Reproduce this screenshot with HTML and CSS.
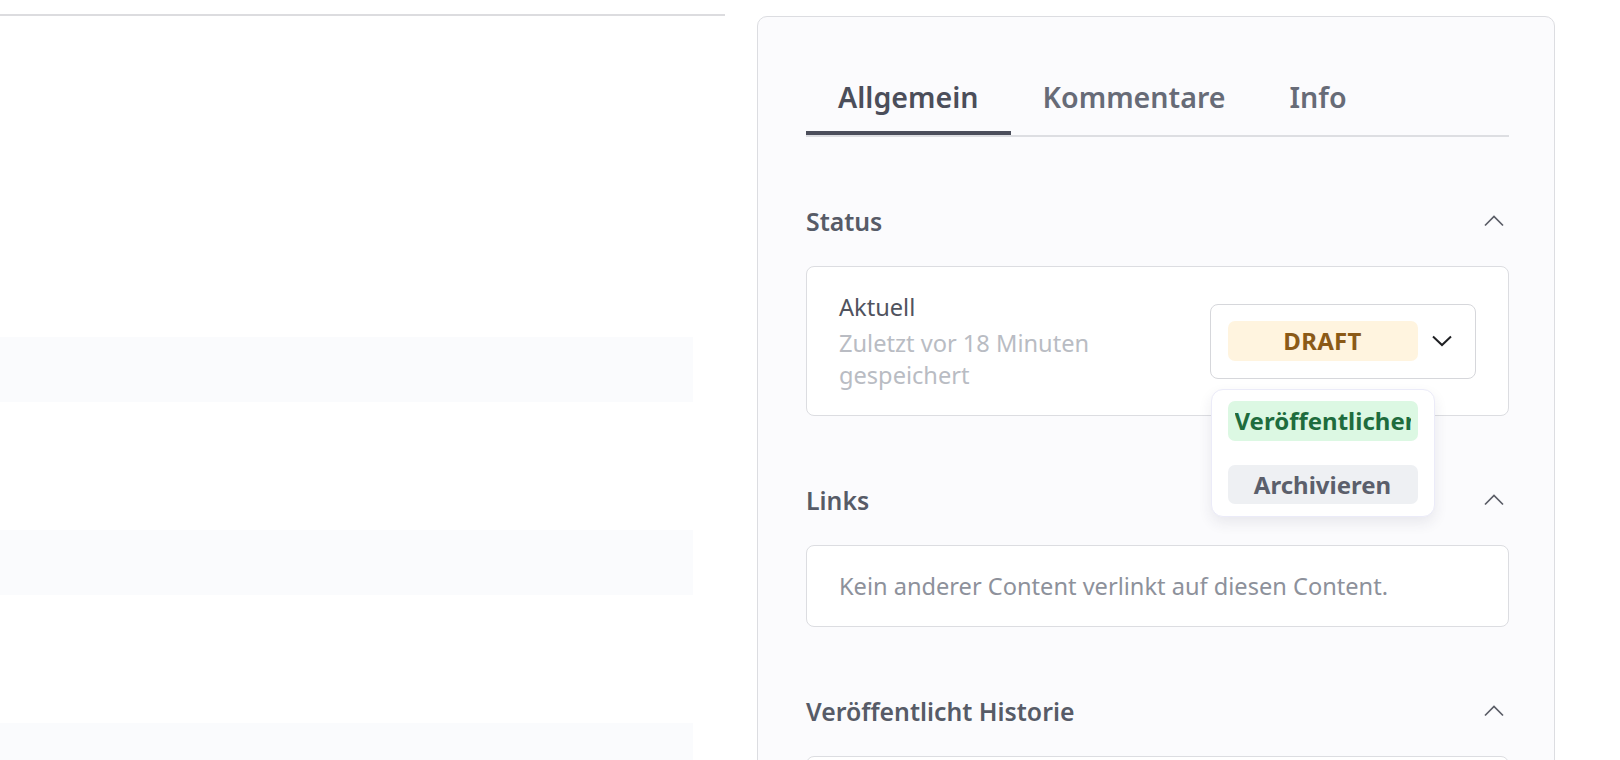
FILE: index.html
```html
<!DOCTYPE html>
<html lang="de">
<head>
    <meta charset="UTF-8">
    <meta name="viewport" content="width=device-width, initial-scale=1.0">
    <title>Content bearbeiten</title>
    <link rel="stylesheet" href="styles.css">
</head>
<body>
    <div class="page">
        <!-- Hauptbereich (Liste) -->
        <div class="main">
            <div class="rows">
                <div class="row"></div>
                <div class="row"></div>
                <div class="row"></div>
                <div class="row"></div>
                <div class="row"></div>
                <div class="row row-shade"></div>
                <div class="row"></div>
                <div class="row"></div>
                <div class="row row-shade"></div>
                <div class="row"></div>
                <div class="row"></div>
                <div class="row row-shade"></div>
            </div>
        </div>

        <!-- Seitenleiste -->
        <aside class="sidebar">
            <div class="tabs">
                <div class="tab tab-active">Allgemein</div>
                <div class="tab">Kommentare</div>
                <div class="tab">Info</div>
            </div>

            <div class="section">
                <div class="section-head">
                    <span class="section-title">Status</span>
                    <svg class="chevron-up" width="30" height="30" viewBox="0 0 30 30"><polyline points="6,19.5 15,10.5 24,19.5" fill="none" stroke="#5a5d66" stroke-width="1.7"/></svg>
                </div>
                <div class="box status-box">
                    <div class="status-info">
                        <div class="status-current">Aktuell</div>
                        <div class="status-saved">Zuletzt vor 18 Minuten<br>gespeichert</div>
                    </div>
                    <div class="select-wrap">
                        <div class="select">
                            <span class="pill pill-draft">DRAFT</span>
                            <svg class="chevron-down" width="22" height="14" viewBox="0 0 22 14"><polyline points="2,2.5 11,11 20,2.5" fill="none" stroke="#1f2023" stroke-width="2"/></svg>
                        </div>
                        <div class="menu">
                            <div class="pill pill-publish"><span>Veröffentlichen</span></div>
                            <div class="pill pill-archive">Archivieren</div>
                        </div>
                    </div>
                </div>
            </div>

            <div class="section">
                <div class="section-head">
                    <span class="section-title">Links</span>
                    <svg class="chevron-up" width="30" height="30" viewBox="0 0 30 30"><polyline points="6,19.5 15,10.5 24,19.5" fill="none" stroke="#5a5d66" stroke-width="1.7"/></svg>
                </div>
                <div class="box links-box">
                    Kein anderer Content verlinkt auf diesen Content.
                </div>
            </div>

            <div class="section">
                <div class="section-head">
                    <span class="section-title">Veröffentlicht Historie</span>
                    <svg class="chevron-up" width="30" height="30" viewBox="0 0 30 30"><polyline points="6,19.5 15,10.5 24,19.5" fill="none" stroke="#5a5d66" stroke-width="1.7"/></svg>
                </div>
                <div class="box history-box"></div>
            </div>
        </aside>
    </div>
</body>
</html>
```

FILE: styles.css
```css
:root {
    --border: #dcdde1;
    --panel-bg: #fbfbfd;
    --text-dark: #4b4e5a;
    --text-mid: #676b77;
    --text-light: #b9bcc3;
    --text-muted: #8d919b;
}

* {
    margin: 0;
    padding: 0;
    box-sizing: border-box;
}

body {
    background-color: #ffffff;
    font-family: 'Noto Sans', 'Open Sans', sans-serif;
    color: var(--text-dark);
    overflow: hidden;
    height: 760px;
}

.page {
    display: flex;
    gap: 32px;
    padding-top: 14px;
    height: 100%;
}

.main {
    width: 725px;
    flex-shrink: 0;
    border-top: 2px solid #dcdcdf;
}

.rows {
    width: 693px;
}

.row {
    height: 64.3px;
}

.row-shade {
    background-color: #fafbfd;
}

.sidebar {
    width: 798px;
    flex-shrink: 0;
    margin-top: 2px;
    min-height: 800px;
    background-color: var(--panel-bg);
    border: 1.5px solid var(--border);
    border-radius: 10px;
    padding: 61px 45px 0 48px;
}

.tabs {
    display: flex;
    border-bottom: 2px solid #dddee2;
}

.tab {
    font-size: 28.6px;
    font-weight: 600;
    line-height: 38px;
    color: var(--text-mid);
    padding: 0 32px 15px;
    border-bottom: 4px solid transparent;
}

.tab-active {
    color: var(--text-dark);
    border-bottom-color: #4b4e5b;
}

.section {
    margin-top: 67px;
}

.section-head {
    display: flex;
    justify-content: space-between;
    align-items: center;
    height: 33px;
}

.section-title {
    font-size: 24.8px;
    font-weight: 600;
    color: #575b67;
}

.box {
    margin-top: 29px;
    background-color: #ffffff;
    border: 1.5px solid var(--border);
    border-radius: 8px;
    padding: 24px 32px;
    font-size: 23.6px;
    line-height: 32px;
}

.status-box {
    display: flex;
    justify-content: space-between;
    align-items: center;
}

.status-current {
    color: #50535e;
    margin-bottom: 4px;
}

.status-saved {
    color: var(--text-light);
}

.select-wrap {
    position: relative;
}

.select {
    width: 266px;
    height: 75px;
    border: 1.5px solid #d6d7db;
    border-radius: 8px;
    background-color: #ffffff;
    display: flex;
    align-items: center;
    padding-left: 16.5px;
    gap: 13px;
}

.pill {
    width: 190px;
    height: 39.5px;
    line-height: 39.5px;
    border-radius: 7px;
    text-align: center;
    font-size: 24px;
    font-weight: 700;
    white-space: nowrap;
}

.pill-draft {
    background-color: #fff4df;
    color: #8b5a17;
    letter-spacing: 0.3px;
}

.menu {
    position: absolute;
    top: 85px;
    left: 1px;
    width: 224px;
    background-color: #ffffff;
    border: 1.5px solid #ebebf8;
    border-radius: 12px;
    box-shadow: 0 6px 14px rgba(40, 40, 80, 0.09);
    padding: 11.5px 15.5px 11.5px;
    display: flex;
    flex-direction: column;
    gap: 24px;
    z-index: 5;
}

.pill-publish {
    background-color: #dcf8e3;
    color: #1e6c3d;
    padding: 0 7px;
    text-align: left;
}

.pill-publish span {
    display: block;
    overflow: hidden;
}

.pill-archive {
    background-color: #eef0f3;
    color: #5b5f6b;
}

.links-box {
    color: var(--text-muted);
}

.history-box {
    height: 80px;
}
```
